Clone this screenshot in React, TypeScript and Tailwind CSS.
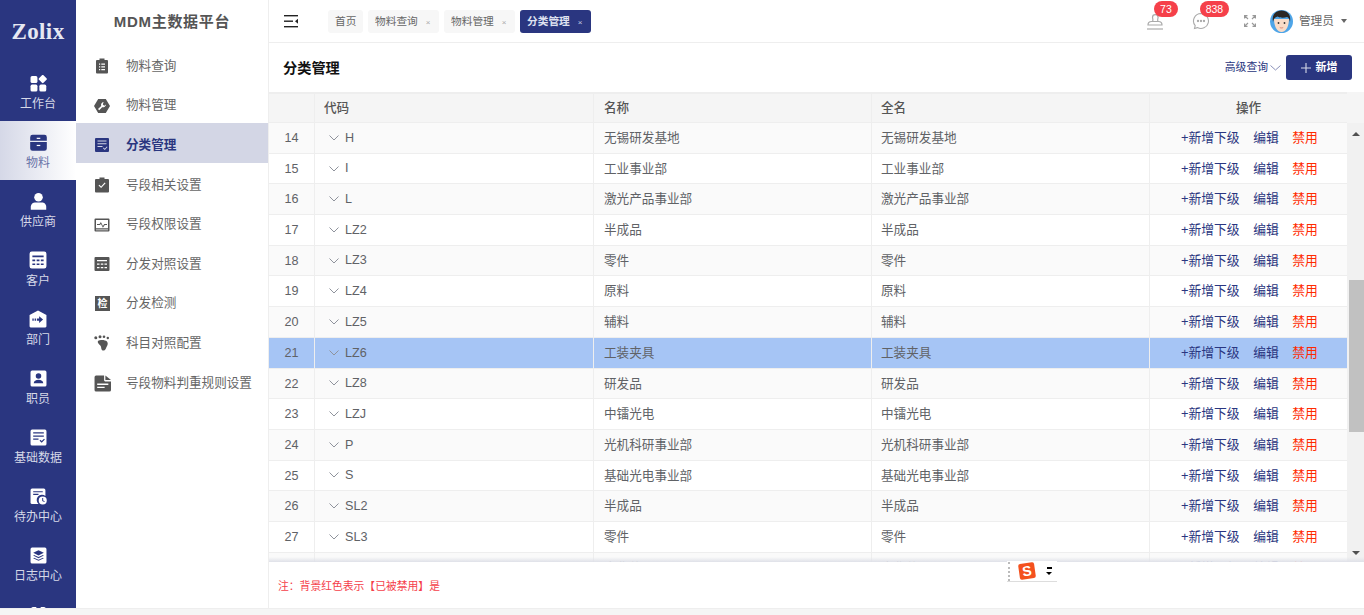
import { ReactNode } from 'react'

const FONT = "font-['Liberation_Sans','Noto_Sans_CJK_SC',sans-serif]"

const rows = [
  ['14', 'H', '无锡研发基地'],
  ['15', 'I', '工业事业部'],
  ['16', 'L', '激光产品事业部'],
  ['17', 'LZ2', '半成品'],
  ['18', 'LZ3', '零件'],
  ['19', 'LZ4', '原料'],
  ['20', 'LZ5', '辅料'],
  ['21', 'LZ6', '工装夹具'],
  ['22', 'LZ8', '研发品'],
  ['23', 'LZJ', '中镭光电'],
  ['24', 'P', '光机科研事业部'],
  ['25', 'S', '基础光电事业部'],
  ['26', 'SL2', '半成品'],
  ['27', 'SL3', '零件'],
  ['28', 'SL4', '全化体'],
]

const Svg = ({ children, size = 16 }: { children: ReactNode; size?: number }) => (
  <svg width={size} height={size} viewBox="0 0 16 16" fill="currentColor">
    {children}
  </svg>
)

const icons: Record<string, ReactNode> = {
  work: (
    <Svg size={17}>
      <rect x="0.5" y="1" width="6.5" height="6.5" rx="1.5" />
      <rect x="9" y="0.8" width="6" height="6" rx="1" transform="rotate(45 12 3.8)" />
      <rect x="0.5" y="9" width="6.5" height="6.5" rx="1.5" />
      <rect x="8.8" y="9" width="6.5" height="6.5" rx="1.5" />
    </Svg>
  ),
  material: (
    <Svg size={19}>
      <path d="M3 1.500h10a2 2 0 0 1 2 2v3H1v-3a2 2 0 0 1 2-2zM1 7.600h14v5.400a2 2 0 0 1-2 2H3a2 2 0 0 1-2-2z" />
      <rect x="6.500" y="4" width="3" height="1" fill="#fff" />
      <rect x="6.500" y="10" width="3" height="1" fill="#fff" />
    </Svg>
  ),
  supplier: (
    <Svg size={19}>
      <circle cx="8" cy="4.500" r="3.600" />
      <path d="M1.500 15v-2.500C1.500 10 3.500 8.800 5 8.800h6c1.500 0 3.500 1.200 3.500 3.700V15z" />
    </Svg>
  ),
  customer: (
    <Svg size={18}>
      <path
        fillRule="evenodd"
        d="M2.500 0.500h11a2 2 0 0 1 2 2v11a2 2 0 0 1-2 2h-11a2 2 0 0 1-2-2v-11a2 2 0 0 1 2-2zM3 4v1.500h10V4zM3 7.500V9h2.500V7.500zM6.800 7.500V9h2.500V7.500zM10.500 7.500V9H13V7.500zM3 11v1.500h2.500V11zM6.800 11v1.500h2.500V11zM10.500 11v1.500H13V11z"
      />
    </Svg>
  ),
  dept: (
    <Svg size={18}>
      <path
        fillRule="evenodd"
        d="M8 0.500l7.500 4v10a1 1 0 0 1-1 1h-13a1 1 0 0 1-1-1v-10zM9 5.500v2H7v2h2v2l3.500-3zM3 7.500v2h1.200v-2zM5 7.500v2h1.200v-2z"
      />
    </Svg>
  ),
  staff: (
    <Svg size={17}>
      <path
        fillRule="evenodd"
        d="M2 0.500h12a1.500 1.500 0 0 1 1.500 1.500v12a1.500 1.500 0 0 1-1.500 1.500H2A1.500 1.500 0 0 1 0.500 14V2A1.500 1.500 0 0 1 2 0.500zM8 3a2.600 2.600 0 1 0 0 5.200A2.600 2.600 0 0 0 8 3zM3.500 12.500h9c0-2-2-3.300-4.500-3.300s-4.500 1.300-4.500 3.300z"
      />
    </Svg>
  ),
  base: (
    <Svg size={17}>
      <path
        fillRule="evenodd"
        d="M2 0.500h12A1.500 1.500 0 0 1 15.500 2v12a1.500 1.500 0 0 1-1.500 1.500H2A1.500 1.500 0 0 1 0.500 14V2A1.500 1.500 0 0 1 2 0.500zM3 3v1.200h10V3zM3 6v1.200h10V6zM3 9v1.200h5V9zM9 11l2 2 3-3.200-.8-.7L11 11.400l-1.200-1.200z"
      />
    </Svg>
  ),
  todo: (
    <Svg size={17}>
      <path
        fillRule="evenodd"
        d="M2 0.500h11A1.500 1.500 0 0 1 14.500 2v5.500a4.500 4.500 0 0 0-6.500 7.500H2A1.500 1.500 0 0 1 0.500 14V2A1.500 1.500 0 0 1 2 0.500zM3 3v1.100h9V3zM3 5.500v1.100h5V5.500z"
      />
      <path
        fillRule="evenodd"
        d="M12 8a3.800 3.800 0 1 1 0 7.600A3.800 3.800 0 0 1 12 8zM11.500 9.500v2.700l2 1 .4-.8-1.500-.7V9.500z"
      />
    </Svg>
  ),
  log: (
    <Svg size={17}>
      <path
        fillRule="evenodd"
        d="M2 0.500h12A1.500 1.500 0 0 1 15.500 2v12a1.500 1.500 0 0 1-1.500 1.500H2A1.500 1.500 0 0 1 0.500 14V2A1.500 1.500 0 0 1 2 0.500zM8 3L3 5.500 8 8l5-2.500zM3.800 7.500L3 8l5 2.500L13 8l-.8-.5L8 9.500zM3.800 10L3 10.500 8 13l5-2.500-.8-.5L8 12z"
      />
    </Svg>
  ),
  heart: (
    <Svg size={17}>
      <path d="M1 3a2 2 0 0 1 2-2h2.500L7 2.500h2L10.500 1H13a2 2 0 0 1 2 2v11H1z" />
    </Svg>
  ),
  query: (
    <Svg>
      <path
        fillRule="evenodd"
        d="M5.500 0.500h5V2H13a1 1 0 0 1 1 1v11.500a1 1 0 0 1-1 1H3a1 1 0 0 1-1-1V3a1 1 0 0 1 1-1h2.500zM5 5.500v1.200h1.200V5.500zM7.300 5.500v1.200H11V5.500zM5 8.200v1.200h1.200V8.200zM7.300 8.200v1.200H11V8.200zM5 11v1.200h1.200V11zM7.300 11v1.200H11V11z"
      />
    </Svg>
  ),
  wrench: (
    <Svg>
      <path
        fillRule="evenodd"
        d="M4.200 1h7.600L16 8l-4.200 7H4.200L0 8zM10 4a3 3 0 0 0-2.800 4L4 11l1.200 1.200 3-3A3 3 0 0 0 12 6.500l-1.700 1.200-1.500-1.200.7-2.200z"
      />
    </Svg>
  ),
  cate: (
    <Svg>
      <path
        fillRule="evenodd"
        d="M2 1h12a1 1 0 0 1 1 1v12a1 1 0 0 1-1 1H2a1 1 0 0 1-1-1V2a1 1 0 0 1 1-1zM3.500 3.500v1h9v-1zM3.500 6.200v1h9v-1zM3.500 9v1h5V9zM9 11.200l1.800 1.800 2.700-3-.7-.6-2 2.300-1.200-1.200z"
      />
    </Svg>
  ),
  clip: (
    <Svg>
      <path
        fillRule="evenodd"
        d="M5.500 0.500h5V2H14a1 1 0 0 1 1 1v11.500a1 1 0 0 1-1 1H2a1 1 0 0 1-1-1V3a1 1 0 0 1 1-1h3.500zM4.500 8.500l2.600 2.600 4.500-4.800-.9-.8-3.600 3.900-1.700-1.700z"
      />
    </Svg>
  ),
  chart: (
    <Svg>
      <path
        fillRule="evenodd"
        d="M1.500 1.500h13a1 1 0 0 1 1 1v11a1 1 0 0 1-1 1h-13a1 1 0 0 1-1-1v-11a1 1 0 0 1 1-1zM2 3v8.200h12V3zM2 12.400v.8h12v-.8z"
      />
      <path d="M3 7.100h2.600l1.300-2 2 4 1.400-2H13v.9h-2.200l-1.900 2.800-2-4-.8 1.200H3z" />
    </Svg>
  ),
  calc: (
    <Svg>
      <path
        fillRule="evenodd"
        d="M1.500 1h13a1 1 0 0 1 1 1v12a1 1 0 0 1-1 1h-13a1 1 0 0 1-1-1V2a1 1 0 0 1 1-1zM3 4v1.300h10V4zM3 7.500v1.300h2.500V7.500zM6.800 7.500v1.300h2.500V7.500zM10.500 7.500v1.300H13V7.500zM3 11v1.300h2.500V11zM6.800 11v1.300h2.500V11zM10.500 11v1.300H13V11z"
      />
    </Svg>
  ),
  foot: (
    <Svg>
      <circle cx="1.800" cy="2.800" r="1.500" />
      <circle cx="6" cy="1.800" r="1.500" />
      <circle cx="10" cy="1.800" r="1.300" />
      <circle cx="13.800" cy="3" r="1.200" />
      <path d="M4 6c2-1.500 7-1.500 9 .5 1.500 1.800.5 4-.5 5.500-.7 1.500-1 3.500-3 3.500-2.200 0-2.200-2.300-2.500-3.800C6.500 10 2.800 8 4 6z" />
    </Svg>
  ),
  doc: (
    <Svg size={17}>
      <path
        fillRule="evenodd"
        d="M2 0.500h7.500V5a1 1 0 0 0 1 1H16v8a1.500 1.500 0 0 1-1.500 1.500H2A1.500 1.500 0 0 1 .5 14V2A1.500 1.500 0 0 1 2 .5zM3 8v1.300h10.500V8zM3 11v1.300h7V11z"
      />
      <path d="M10.700 0.500L16 4.800h-5.300z" />
    </Svg>
  ),
}

const primaryNav = [
  ['work', '工作台'],
  ['material', '物料'],
  ['supplier', '供应商'],
  ['customer', '客户'],
  ['dept', '部门'],
  ['staff', '职员'],
  ['base', '基础数据'],
  ['todo', '待办中心'],
  ['log', '日志中心'],
  ['heart', '系统设置'],
]

const secondaryNav = [
  ['query', '物料查询'],
  ['wrench', '物料管理'],
  ['cate', '分类管理'],
  ['clip', '号段相关设置'],
  ['chart', '号段权限设置'],
  ['calc', '分发对照设置'],
  ['check', '分发检测'],
  ['foot', '科目对照配置'],
  ['doc', '号段物料判重规则设置'],
]

function PrimaryNav() {
  return (
    <div className="w-[76px] shrink-0 bg-[#2a3680] overflow-hidden flex flex-col">
      <div className="h-[62px] shrink-0 flex items-center justify-center text-[23px] leading-none font-bold font-['Liberation_Serif',serif] text-[#e6e8f2] tracking-[0.4px]">
        Zolix
      </div>
      {primaryNav.map(([icon, label]) => (
        <div
          key={label}
          className={
            label === '物料'
              ? 'h-[59px] shrink-0 flex flex-col items-center pt-[11px] bg-gradient-to-r from-[#d5d8e7] to-white text-[#2a3680]'
              : 'h-[59px] shrink-0 flex flex-col items-center pt-[11px] text-white'
          }
        >
          <div className="h-[20px] flex items-center justify-center">{icons[icon]}</div>
          <div
            className={
              label === '物料'
                ? 'text-[12px] leading-[16px] mt-[3px] text-[#6a74a8]'
                : 'text-[12px] leading-[16px] mt-[3px] text-[#d6d9e8]'
            }
          >
            {label}
          </div>
        </div>
      ))}
    </div>
  )
}

function SecondaryNav() {
  return (
    <div className="w-[193px] shrink-0 bg-white border-r border-[#eeeeee] flex flex-col">
      <div className="h-[44px] shrink-0 pt-[12px] text-center text-[15px] leading-[20px] font-bold text-[#555555] tracking-[0.7px]">
        MDM主数据平台
      </div>
      {secondaryNav.map(([icon, label]) => (
        <div
          key={label}
          className={
            label === '分类管理'
              ? 'h-[39.6px] shrink-0 pt-[5px] flex items-center bg-[#d3d6e5] text-[#2a3680] font-bold'
              : 'h-[39.6px] shrink-0 pt-[5px] flex items-center text-[#666666]'
          }
        >
          <div
            className={
              label === '分类管理'
                ? 'w-[50px] pl-[18px] shrink-0 flex text-[#2a3680]'
                : 'w-[50px] pl-[18px] shrink-0 flex text-[#555555]'
            }
          >
            {icon === 'check' ? (
              <div className="w-[15px] h-[15px] ml-[1px] bg-[#555555] text-white text-[10px] leading-[15px] text-center font-bold">
                检
              </div>
            ) : (
              icons[icon]
            )}
          </div>
          <span className="text-[12.600px]">{label}</span>
        </div>
      ))}
    </div>
  )
}

function Tag({ label, active, closable = true }: { label: string; active?: boolean; closable?: boolean }) {
  return (
    <div
      className={
        active
          ? 'h-[23px] w-[71px] pl-[7px] rounded-[3px] flex items-center gap-[8px] bg-[#2a3680] text-[#dfe2f0] font-bold text-[10.700px]'
          : closable
            ? 'h-[23px] w-[71px] pl-[7px] rounded-[3px] flex items-center gap-[8px] bg-[#f7f7f7] text-[#666666] text-[10.700px]'
            : 'h-[23px] w-[35px] pl-[7px] rounded-[3px] flex items-center bg-[#f7f7f7] text-[#666666] text-[10.700px]'
      }
    >
      <span>{label}</span>
      {closable && (
        <span className={active ? 'mt-[3px] text-[8px] text-[#c5c9e0] font-normal' : 'mt-[3px] text-[8px] text-[#aaaaaa]'}>
          ×
        </span>
      )}
    </div>
  )
}

function TopBar() {
  return (
    <div className="h-[43px] shrink-0 bg-white border-b border-[#eeeeee] flex items-center relative">
      <svg width="15" height="13" viewBox="0 0 15 13" className="ml-[15px] text-[#222222]" fill="currentColor">
        <rect width="14" height="1.400" />
        <rect y="5.500" width="9" height="1.400" />
        <rect y="11" width="14" height="1.400" />
        <path d="M14 3.800v5l-3-2.500z" />
      </svg>
      <div className="flex items-center gap-[5px] ml-[29px]">
        <Tag label="首页" closable={false} />
        <Tag label="物料查询" />
        <Tag label="物料管理" />
        <Tag label="分类管理" active />
      </div>
      <div className="ml-auto flex items-center text-[#aaaaaa]">
        <div className="relative mr-[28px]">
          <svg width="18" height="18" viewBox="0 0 18 18" fill="none" stroke="currentColor" strokeWidth="1.200">
            <path d="M6.500 9.500c1-1.500.2-2.500 0-4a2.800 2.800 0 0 1 5.600 0c-.2 1.500-1 2.500-.1 4" />
            <path d="M2 13c0-2 1.500-3.500 3.500-3.500h7c2 0 3.500 1.500 3.500 3.500z" />
            <path d="M1 17h16" />
          </svg>
          <span className="absolute left-[8px] top-[-11px] h-[16px] w-[24px] rounded-full bg-[#f5404a] text-white text-[10.500px] leading-[16px] text-center">
            73
          </span>
        </div>
        <div className="relative mr-[34px]">
          <svg width="18" height="18" viewBox="0 0 18 18" fill="none" stroke="currentColor" strokeWidth="1.100">
            <path d="M9 1.500a7.500 7.500 0 1 1-3.600 14.100L2.500 16.500l.7-2.800A7.500 7.500 0 0 1 9 1.500z" />
            <circle cx="6" cy="9" r=".6" fill="currentColor" />
            <circle cx="9" cy="9" r=".6" fill="currentColor" />
            <circle cx="12" cy="9" r=".6" fill="currentColor" />
          </svg>
          <span className="absolute left-[8px] top-[-11px] h-[16px] w-[29px] rounded-full bg-[#f5404a] text-white text-[10.500px] leading-[16px] text-center">
            838
          </span>
        </div>
        <svg width="12" height="12" viewBox="0 0 12 12" fill="none" stroke="#999999" strokeWidth="1.200" className="mr-[14px]">
          <path d="M0.600 3.500V0.600H3.500M0.800 0.800L4 4M8.500 0.600h2.900v2.900M11.200 0.800L8 4M0.600 8.500v2.900h2.900M0.800 11.200L4 8M8.500 11.400h2.900V8.500M11.200 11.200L8 8" />
        </svg>
        <svg width="23" height="23" viewBox="0 0 23 23" className="mr-[6px]">
          <circle cx="11.500" cy="11.500" r="11.500" fill="#4ea5e8" />
          <path d="M4 9c0 7 3 13 7.500 13S19 16 19 9z" fill="#f9dcc8" />
          <path d="M3 12C1.500 4 6.500 .5 11.500 .5S21.500 4 20 12c-.5-3-1.500-4.500-3-5-3 1-7 1-9.500-.5C5 7 3.500 9 3 12z" fill="#2b2725" />
          <circle cx="8.500" cy="13" r=".9" fill="#333333" />
          <circle cx="14.500" cy="13" r=".9" fill="#333333" />
          <path d="M9.800 17.500c1 .6 2.400 .6 3.400 0" stroke="#d0705f" strokeWidth=".8" fill="none" />
        </svg>
        <span className="text-[11.700px] text-[#666666]">管理员</span>
        <span className="ml-[7px] mr-[17px] w-0 h-0 border-x-[3px] border-x-transparent border-t-[4px] border-t-[#666666]" />
      </div>
    </div>
  )
}

function TitleBar() {
  return (
    <div className="h-[49px] shrink-0 bg-white flex items-center pl-[14px] pr-[12px]">
      <div className="mt-[3px] text-[14.200px] font-bold text-[#111111]">分类管理</div>
      <div className="ml-auto text-[10.800px] text-[#2a3680]">高级查询</div>
      <svg width="11" height="6" viewBox="0 0 11 6" fill="none" stroke="#8a90b8" strokeWidth="1" className="ml-[2px] mr-[5px]">
        <path d="M0.500 0.500l5 4.500 5-4.500" />
      </svg>
      <button className="h-[25px] w-[66px] rounded-[3px] bg-[#2a3680] text-white text-[11px] font-bold flex items-center justify-center gap-[5px]">
        <svg width="10" height="10" viewBox="0 0 10 10" stroke="#d6d9e8" strokeWidth="1.100">
          <path d="M5 0v10M0 5h10" />
        </svg>
        新增
      </button>
    </div>
  )
}

function Table() {
  return (
    <div className="flex-1 min-h-0 flex flex-col overflow-hidden relative">
      <div className="h-[31px] shrink-0 flex border-t-2 border-b border-[#eeeeee] bg-[#f5f5f5] text-[12.600px] font-medium text-[#555555] mr-[17px]">
        <div className="w-[46px] shrink-0 border-r border-[#eeeeee]" />
        <div className="w-[279px] shrink-0 pl-[9px] border-r border-[#eeeeee] leading-[28px]">代码</div>
        <div className="w-[278px] shrink-0 pl-[10px] border-r border-[#eeeeee] leading-[28px]">名称</div>
        <div className="w-[278px] shrink-0 pl-[9px] border-r border-[#eeeeee] leading-[28px]">全名</div>
        <div className="flex-1 text-center leading-[28px]">操作</div>
      </div>
      <div className="flex-1 min-h-0 flex">
        <div className="flex-1 min-w-0 overflow-hidden text-[12.600px] text-[#606266]">
          {rows.map(([no, code, name]) => {
            const n = Number(no)
            const bg = n === 21 ? 'bg-[#a6c5f5]' : n % 2 === 0 ? 'bg-[#fafafa]' : 'bg-white'
            return (
              <div key={no} className={`h-[30.7px] flex border-b border-[#eeeeee] items-stretch leading-[31.3px] ${bg}`}>
                <div className="w-[46px] shrink-0 text-center border-r border-[#eeeeee]">{no}</div>
                <div className="w-[279px] shrink-0 border-r border-[#eeeeee] flex items-center pl-[14px]">
                  <svg width="10" height="6" viewBox="0 0 10 6" fill="none" stroke="#8f939c" strokeWidth="1" className="mr-[6px]">
                    <path d="M0.500 0.500l4.500 4.500 4.500-4.500" />
                  </svg>
                  <span className="mt-[1px]">{code}</span>
                </div>
                <div className="w-[278px] shrink-0 pl-[10px] border-r border-[#eeeeee]">{name}</div>
                <div className="w-[278px] shrink-0 pl-[9px] border-r border-[#eeeeee]">{name}</div>
                <div className="flex-1 flex gap-[13.500px] pl-[31px] text-[12.800px] leading-[30.300px]">
                  <span className="text-[#2a3680]">+新增下级</span>
                  <span className="text-[#2a3680]">编辑</span>
                  <span className="text-[#ff2a00]">禁用</span>
                </div>
              </div>
            )
          })}
        </div>
        <div className="w-[17px] shrink-0 bg-[#f1f1f1] flex flex-col items-center justify-between relative">
          <span className="mt-[9px] w-0 h-0 border-x-[4px] border-x-transparent border-b-[4px] border-b-[#505050]" />
          <div className="absolute left-[2px] right-0 top-[157px] h-[152px] bg-[#c1c1c1]" />
          <span className="mb-[7px] w-0 h-0 border-x-[4px] border-x-transparent border-t-[4px] border-t-[#505050]" />
        </div>
      </div>
      <div className="absolute left-0 right-0 bottom-0 h-[5px] bg-gradient-to-b from-transparent to-[#dfe1e8]" />
    </div>
  )
}

function SogouWidget() {
  return (
    <div className="absolute left-[738px] bottom-[26px] h-[21px] w-[50px] bg-white border-b border-[#dddddd] flex items-center">
      <div className="ml-[1px] h-[19px] border-l-2 border-dotted border-[#bbbbbb]" />
      <div className="ml-[9px] w-[16px] h-[16px] bg-[#f4511e] rounded-[2px] rotate-[-8deg] text-white text-[14px] leading-[16px] font-bold text-center">
        S
      </div>
      <div className="ml-[11px] flex flex-col items-center gap-[3px]">
        <span className="w-[5px] h-[2px] bg-black" />
        <span className="w-0 h-0 border-x-[3px] border-x-transparent border-t-[3px] border-t-black" />
      </div>
    </div>
  )
}

export default function App() {
  return (
    <div className={`h-[615px] w-[1364px] overflow-hidden bg-[#f5f5f5] flex flex-col ${FONT}`}>
      <div className="h-[608px] shrink-0 flex">
        <PrimaryNav />
        <SecondaryNav />
        <div className="flex-1 min-w-0 flex flex-col relative">
          <TopBar />
          <TitleBar />
          <Table />
          <div className="h-[46px] shrink-0 bg-white pl-[9px] pt-[16px] text-[10.800px] leading-[16px] text-[#f5404a]">
            注：背景红色表示【已被禁用】是
          </div>
          <SogouWidget />
        </div>
      </div>
      <div className="flex-1 border-t border-[#eeeeee]" />
    </div>
  )
}
